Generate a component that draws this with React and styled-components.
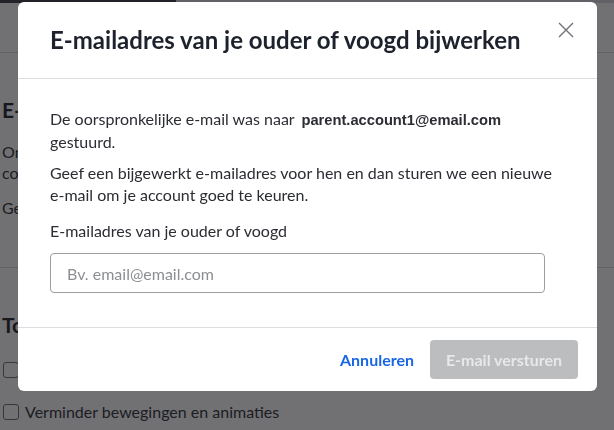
import React from 'react';
import styled, { createGlobalStyle } from 'styled-components';

const GlobalStyle = createGlobalStyle`
  html, body {
    margin: 0;
    padding: 0;
    background: #ffffff;
  }
  body {
    font-family: Lato, "Open Sans", sans-serif;
    color: #1f2127;
  }
  * {
    box-sizing: border-box;
  }
`;

const App = () => {
  return (
    <>
      <GlobalStyle />
      <Page>
        <TabBar>
          <Tab active />
          <Tab />
        </TabBar>
        <Divider />
        <Section>
          <SectionTitle>E-mailadres</SectionTitle>
          <SectionText>Ontvang meldingen over je account en je</SectionText>
          <SectionText>content.</SectionText>
          <SectionText spaced>Geef je e-mailadres op</SectionText>
        </Section>
        <Divider />
        <Section>
          <SectionTitle>Toegankelijkheid</SectionTitle>
          <CheckRow>
            <Box />
            <span>Tekst groter maken</span>
          </CheckRow>
          <CheckRow>
            <Box />
            <span>Verminder bewegingen en animaties</span>
          </CheckRow>
        </Section>
      </Page>
      <Overlay />
      <Modal role="dialog">
        <Header>
          <Title>E-mailadres van je ouder of voogd bijwerken</Title>
          <CloseButton aria-label="Sluiten">
            <svg width="16" height="16" viewBox="0 0 16 16">
              <path d="M1 1 L15 15 M15 1 L1 15" stroke="#6f7177" strokeWidth="1.4" fill="none" />
            </svg>
          </CloseButton>
        </Header>
        <Body>
          <Paragraph>
            De oorspronkelijke e-mail was naar <Email>parent.account1@email.com</Email> gestuurd.
          </Paragraph>
          <Paragraph>
            Geef een bijgewerkt e-mailadres voor hen en dan sturen we een nieuwe e-mail om je account goed te keuren.
          </Paragraph>
          <Label htmlFor="parent-email">E-mailadres van je ouder of voogd</Label>
          <Input id="parent-email" placeholder="Bv. email@email.com" />
        </Body>
        <Footer>
          <LinkButton>Annuleren</LinkButton>
          <PrimaryButton disabled>E-mail versturen</PrimaryButton>
        </Footer>
      </Modal>
    </>
  );
};

export default App;

const Page = styled.div`
  width: 614px;
  height: 430px;
  overflow: hidden;
  padding: 0 4px 0 2px;
`;

const TabBar = styled.div`
  display: flex;
  height: 3px;
  margin: 0 -4px 0 -2px;
`;

const Tab = styled.div`
  width: 176px;
  height: 3px;
  background: ${props => (props.active ? '#3a3c42' : '#d8d9dc')};
  flex: ${props => (props.active ? 'none' : '1')};
`;

const Divider = styled.div`
  height: 1px;
  background: #d5d6d9;
  margin: 49px -4px 0 -2px;
`;

const Section = styled.div`
  padding-top: 44px;
`;

const SectionTitle = styled.h2`
  margin: 0 0 18px;
  font-size: 21px;
  line-height: 26px;
  font-weight: 700;
  color: #1f2127;
  white-space: nowrap;
`;

const SectionText = styled.p`
  margin: ${props => (props.spaced ? '14px 0 0' : '0')};
  font-size: 16px;
  line-height: 21px;
  color: #2d2f34;
  white-space: nowrap;
`;

const CheckRow = styled.label`
  display: flex;
  align-items: center;
  gap: 6px;
  font-size: 16px;
  line-height: 21px;
  color: #2d2f34;
  margin-top: 21px;
`;

const Box = styled.span`
  width: 16px;
  height: 16px;
  border: 1px solid #6b6d72;
  border-radius: 3px;
  background: #fff;
  margin-left: 1px;
`;

const Overlay = styled.div`
  position: fixed;
  inset: 0;
  background: rgba(18, 19, 24, 0.6);
`;

const Modal = styled.div`
  position: fixed;
  left: 18px;
  top: 2px;
  width: 579px;
  height: 389px;
  background: #ffffff;
  border-radius: 6px;
  display: flex;
  flex-direction: column;
  overflow: hidden;
`;

const Header = styled.div`
  display: flex;
  align-items: flex-start;
  justify-content: space-between;
  height: 77px;
  padding: 22px 23px 0 32px;
  border-bottom: 1px solid #dcdde0;
`;

const Title = styled.h1`
  margin: 0;
  font-size: 24px;
  line-height: 32px;
  font-weight: 700;
  color: #1e222c;
`;

const CloseButton = styled.button`
  border: none;
  background: none;
  padding: 0;
  margin-top: -2px;
  width: 16px;
  height: 16px;
  cursor: pointer;
  display: flex;
`;

const Body = styled.div`
  flex: 1;
  padding: 29px 42px 32px 32px;
  border-bottom: 1px solid #dcdde0;
`;

const Paragraph = styled.p`
  margin: 0 0 9px;
  font-size: 16px;
  line-height: 22px;
  color: #2b2d33;
`;

const Email = styled.strong`
  font-family: "Liberation Sans", Arial, sans-serif;
  font-size: 14.7px;
  font-weight: 700;
  margin-left: 3px;
`;

const Label = styled.label`
  display: block;
  margin-top: 14px;
  font-size: 16px;
  line-height: 22px;
  color: #2b2d33;
`;

const Input = styled.input`
  display: block;
  margin-top: 11px;
  width: 495px;
  height: 40px;
  padding: 0 16px;
  border: 1px solid #9c9ea3;
  border-radius: 4px;
  font-family: Lato, sans-serif;
  font-size: 16px;
  color: #2b2d33;
  outline: none;
  &::placeholder {
    color: #8d8f94;
  }
`;

const Footer = styled.div`
  display: flex;
  align-items: center;
  justify-content: flex-end;
  gap: 16px;
  height: 63px;
  padding: 0 19px 0 32px;
`;

const LinkButton = styled.button`
  border: none;
  background: none;
  padding: 0;
  font-family: Lato, sans-serif;
  font-size: 16px;
  font-weight: 700;
  color: #1a67e6;
  cursor: pointer;
`;

const PrimaryButton = styled.button`
  width: 148px;
  height: 39px;
  border: none;
  border-radius: 4px;
  background: #bcbdbf;
  color: #e8e8e9;
  font-family: Lato, sans-serif;
  font-size: 16px;
  font-weight: 700;
  cursor: default;
`;
